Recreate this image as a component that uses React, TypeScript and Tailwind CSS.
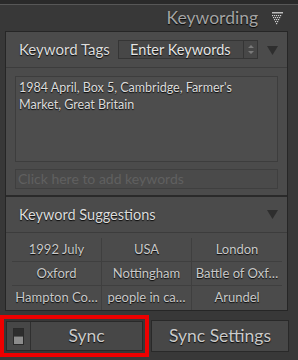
import React from 'react';

const shadow = '[text-shadow:0_1px_1px_rgba(0,0,0,0.9)]';

const Tri = () => (
  <svg width="11" height="9" viewBox="0 0 11 9" className="shrink-0">
    <path d="M0 0 L11 0 L5.5 9 Z" fill="#2e2e2e" />
  </svg>
);

const DotIcon = () => (
  <svg width="11" height="13" viewBox="0 0 11 13">
    <rect x="0" y="0" width="11" height="1.5" fill="#bdbdbd" />
    {[0, 1, 2, 3, 4].map((r) =>
      Array.from({ length: 5 - r }).map((_, c) => (
        <rect key={`${r}-${c}`} x={r + c * 2} y={3 + r * 2} width="1.2" height="1.2" fill="#cfcfcf" />
      ))
    )}
  </svg>
);

const suggestions = ['1992 July', 'USA', 'London', 'Oxford', 'Nottingham', 'Battle of Oxf…', 'Hampton Co…', 'people in ca…', 'Arundel'];

const App: React.FC = () => {
  return (
    <div
      className="w-[298px] h-[360px] bg-[#383838] overflow-hidden text-[#dcdcdc]"
      style={{ fontFamily: 'Lato, "Open Sans", sans-serif' }}
    >
      <div className="h-[4px] bg-[#2a2a2a]" />
      <div className="h-[1px] bg-[#575757]" />
      <div className="h-[26px] flex items-center justify-end pr-[15px] gap-[14px]">
        <span className={`text-[17.5px] text-[#a4a4a4] ${shadow}`}>Keywording</span>
        <DotIcon />
      </div>

      <div className="ml-[5px] w-[283px] border border-[#262626] bg-[#4b4b4b]">
        <div className="h-[35px] flex items-center pl-[13px] pr-[9px]">
          <span className={`text-[15px] w-[99px] ${shadow}`}>Keyword Tags</span>
          <div className="w-[140px] h-[19px] border border-[#353535] bg-[#474747] flex items-stretch">
            <span className={`flex-1 text-[14.5px] leading-[17px] pl-[11px] text-[#e4e4e4] ${shadow}`}>Enter Keywords</span>
            <div className="w-[14px] border-l border-[#353535] flex flex-col items-center justify-center gap-[2px]">
              <svg width="6" height="11" viewBox="0 0 6 11">
                <path d="M0 4 L3 1 L6 4 Z M0 7 L3 10 L6 7 Z" fill="#7a7a7a" />
              </svg>
            </div>
          </div>
          <div className="ml-auto mt-[1px]">
            <Tri />
          </div>
        </div>
        <div className="h-[1px] bg-[#3c3c3c]" />
        <div className="px-[9px] pt-[8px] pb-[6px] flex flex-col gap-[7px]">
          <div className={`h-[86px] border border-[#3d3d3d] bg-[#4d4d4d] px-[3px] pt-[3px] text-[12.5px] leading-[16.5px] ${shadow}`}>
            1984 April, Box 5, Cambridge, Farmer's Market, Great Britain
          </div>
          <div className="h-[20px] border border-[#3f3f3f] bg-[#4a4a4a] px-[2px] text-[14px] leading-[18px] text-[#606060]">
            Click here to add keywords
          </div>
        </div>
        <div className="h-[2px] bg-[#2a2a2a]" />
        <div className="h-[35px] flex items-center pl-[13px] pr-[9px]">
          <span className={`text-[14.5px] ${shadow}`}>Keyword Suggestions</span>
          <div className="ml-auto">
            <Tri />
          </div>
        </div>
        <div className="h-[1px] bg-[#3c3c3c]" />
        <div className="pl-[6px] pr-[5px] pt-[5px]">
          <div className="grid grid-cols-3">
            {suggestions.map((s, i) => (
              <div
                key={s}
                className={`h-[24px] flex items-center justify-center text-[13px] text-[#c9c9c9] ${shadow} ${
                  i % 3 !== 2 ? 'border-r border-[#3f3f3f]' : ''
                } ${i < 6 ? 'border-b border-[#3f3f3f]' : ''}`}
              >
                {s}
              </div>
            ))}
          </div>
        </div>
      </div>

      <div className="flex items-center mt-[4px] gap-[2px] pr-[9px]">
        <div className="w-[149px] h-[42px] border-4 border-[#ee0000] p-[2px]">
          <div className="h-full border border-[#292929] bg-[#474747] flex">
            <div className="w-[24px] border-r border-[#2f2f2f] flex items-center justify-center">
              <div className="w-[11px] h-[17px] border border-[#2a2a2a] flex flex-col">
                <div className="flex-1 bg-[#2d2d2d]" />
                <div className="flex-1 bg-[#8c8c8c] border-t border-[#555]" />
              </div>
            </div>
            <div className={`flex-1 flex items-center justify-center text-[17.5px] text-[#cacaca] ${shadow}`}>Sync</div>
          </div>
        </div>
        <div className={`flex-1 h-[32px] border border-[#292929] bg-[#474747] flex items-center justify-center text-[17.5px] text-[#cacaca] ${shadow}`}>
          Sync Settings
        </div>
      </div>
    </div>
  );
};

export default App;
